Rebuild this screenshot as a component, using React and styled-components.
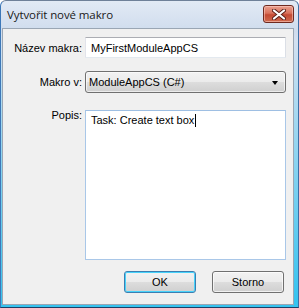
import React from "react";
import styled, { createGlobalStyle } from "styled-components";

const Global = createGlobalStyle`
  html, body {
    margin: 0;
    padding: 0;
    background: #ffffff;
  }
  * {
    box-sizing: border-box;
  }
`;

const Window = styled.div`
  width: 299px;
  height: 308px;
  display: flex;
  flex-direction: column;
  border: 1px solid #6f8199;
  border-left-color: #3d78b8;
  border-bottom-color: #1d3f66;
  border-right-color: #3b6fa6;
  border-radius: 6px 6px 0 0;
  background: linear-gradient(#e2eaf5, #cfdced 30px, #d3e1f1 40px, #36c3ef 300px);
  overflow: hidden;
`;

const TitleBar = styled.div`
  height: 27px;
  flex: none;
  display: flex;
  align-items: center;
  justify-content: space-between;
  padding: 0 4px 1px 6px;
`;

const Title = styled.span`
  font-family: "Open Sans", "Noto Sans", sans-serif;
  font-size: 11.5px;
  color: #1a1a1a;
  letter-spacing: -0.1px;
`;

const CloseButton = styled.div`
  width: 31px;
  height: 18px;
  border: 1px solid #6e2a20;
  border-radius: 3px;
  display: flex;
  align-items: center;
  justify-content: center;
  background: linear-gradient(#e9a08f, #d9725c 45%, #c44a33 55%, #cf6a4f);
  box-shadow: inset 0 0 0 1px rgba(255, 210, 200, 0.55);
`;

const Body = styled.div`
  flex: 1;
  margin: 0 4px 2px 1px;
  border: 1px solid #9aa6b4;
  background: #f0f0f0;
  display: flex;
  flex-direction: column;
  padding: 8px 6px 0 0;
`;

const Form = styled.div`
  display: grid;
  grid-template-columns: 79px 201px;
  column-gap: 3px;
  row-gap: 13px;
  align-items: center;
`;

const Label = styled.label`
  font-family: "Liberation Sans", Arial, sans-serif;
  font-size: 11px;
  color: #000;
  text-align: right;
  align-self: ${(p) => (p.$top ? "start" : "center")};
  padding-top: ${(p) => (p.$top ? "3px" : "0")};
`;

const TextInput = styled.div`
  height: 21px;
  border: 1px solid #abadb3;
  border-left-color: #e2e3ea;
  border-right-color: #dbdfe6;
  border-bottom-color: #e3e9ef;
  background: #fff;
  border-radius: 1px;
  display: flex;
  align-items: center;
  padding-left: 5px;
  font-family: "Liberation Sans", Arial, sans-serif;
  font-size: 11px;
  color: #000;
`;

const Select = styled.div`
  height: 22px;
  border: 1px solid #707070;
  border-radius: 3px;
  background: linear-gradient(#f2f2f2, #ebebeb 50%, #dddddd 51%, #cfcfcf);
  box-shadow: inset 0 0 0 1px rgba(255, 255, 255, 0.6);
  display: flex;
  align-items: center;
  justify-content: space-between;
  padding: 0 7px 0 3px;
  font-family: "Liberation Sans", Arial, sans-serif;
  font-size: 11px;
  color: #000;
`;

const Arrow = styled.span`
  width: 0;
  height: 0;
  border-left: 3.5px solid transparent;
  border-right: 3.5px solid transparent;
  border-top: 4px solid #000;
  margin-top: 1px;
`;

const TextArea = styled.div`
  height: 150px;
  margin-top: 4px;
  border: 1px solid #a9c7e8;
  border-top-color: #9ebfe3;
  background: #fff;
  padding: 3px 5px;
  font-family: "Liberation Sans", Arial, sans-serif;
  font-size: 11px;
  line-height: 13px;
  color: #000;
`;

const Caret = styled.span`
  display: inline-block;
  width: 1px;
  height: 13px;
  background: #000;
  vertical-align: -3px;
  margin-left: 1px;
`;

const ButtonRow = styled.div`
  display: flex;
  justify-content: flex-end;
  gap: 16px;
  margin-top: 11px;
  padding-right: 3px;
`;

const Button = styled.div`
  width: 72px;
  height: 22px;
  border: 1px solid ${(p) => (p.$default ? "#3c7fb1" : "#707070")};
  border-radius: 3px;
  background: linear-gradient(#f2f2f2, #ebebeb 50%, #dddddd 51%, #cfcfcf);
  box-shadow: inset 0 0 0 1px
    ${(p) => (p.$default ? "#48d3fb" : "rgba(255, 255, 255, 0.7)")};
  display: flex;
  align-items: center;
  justify-content: center;
  font-family: "Liberation Sans", Arial, sans-serif;
  font-size: 11px;
  color: #000;
`;

function CloseIcon() {
  return (
    <svg width="14" height="11" viewBox="0 0 14 11">
      <path
        d="M2 1.5 L12 9.5 M12 1.5 L2 9.5"
        stroke="#5a2018"
        strokeWidth="4"
        strokeLinecap="round"
      />
      <path
        d="M2 1.5 L12 9.5 M12 1.5 L2 9.5"
        stroke="#ffffff"
        strokeWidth="2.2"
        strokeLinecap="round"
      />
    </svg>
  );
}

export default function App() {
  return (
    <>
      <Global />
      <Window>
        <TitleBar>
          <Title>Vytvořit nové makro</Title>
          <CloseButton>
            <CloseIcon />
          </CloseButton>
        </TitleBar>
        <Body>
          <Form>
            <Label>Název makra:</Label>
            <TextInput>MyFirstModuleAppCS</TextInput>
            <Label>Makro v:</Label>
            <Select>
              <span>ModuleAppCS (C#)</span>
              <Arrow />
            </Select>
            <Label $top>Popis:</Label>
            <TextArea>
              Task: Create text box
              <Caret />
            </TextArea>
          </Form>
          <ButtonRow>
            <Button $default>OK</Button>
            <Button>Storno</Button>
          </ButtonRow>
        </Body>
      </Window>
    </>
  );
}
